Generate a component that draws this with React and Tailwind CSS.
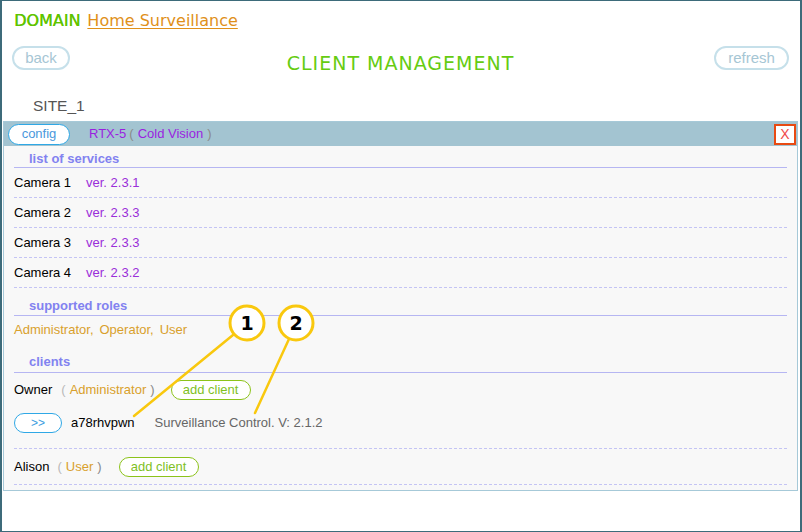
const services = [
  { name: "Camera 1", ver: "ver. 2.3.1" },
  { name: "Camera 2", ver: "ver. 2.3.3" },
  { name: "Camera 3", ver: "ver. 2.3.3" },
  { name: "Camera 4", ver: "ver. 2.3.2" },
];

const roles = ["Administrator", "Operator", "User"];

const sans = "font-['Liberation_Sans',Arial,sans-serif]";
const verdana = "font-['DejaVu_Sans',Verdana,sans-serif]";

export default function App() {
  return (
    <div
      className={`relative h-[532px] w-[802px] overflow-hidden border-x-2 border-y border-[#3d6b7a] bg-white ${sans}`}
    >
      {/* domain */}
      <div className={`flex items-baseline gap-[7px] pl-[12px] pt-[10px] text-[16px] leading-[20px] ${verdana}`}>
        <span className="text-[#5fc400] [text-shadow:0.4px_0_0_#5fc400]">DOMAIN</span>
        <span className="text-[#e0901a] underline underline-offset-[2px]">Home Surveillance</span>
      </div>

      {/* toolbar */}
      <div className="mt-[15px] grid grid-cols-[1fr_auto_1fr] items-start pl-[10px] pr-[11px]">
        <div>
          <GhostButton className="w-[58px]">back</GhostButton>
        </div>
        <h1
          className={`mt-[5px] text-[19px] leading-[24px] tracking-[1px] text-[#66cc11] ${verdana}`}
        >
          CLIENT MANAGEMENT
        </h1>
        <div className="flex justify-end">
          <GhostButton className="w-[75px]">refresh</GhostButton>
        </div>
      </div>

      <div className="mt-[22px] pl-[31px] text-[15.5px] leading-[18px] text-[#555]">SITE_1</div>

      {/* site panel */}
      <div className="ml-[1px] mr-[2px] mt-[6px] border border-[#a6c9d8] bg-[#f8f8f8]">
        <div className="flex h-[24px] items-center bg-[#a3c4d1] pl-[4px] pr-[1px] text-[13px]">
          <button className="h-[21px] w-[62px] rounded-full border border-[#2fa8e6] bg-white text-[13px] leading-[18px] text-[#4a98dc]">
            config
          </button>
          <span className="ml-[19px] text-[#9a1fe0]">RTX-5</span>
          <span className="ml-[3px] text-[#8a8a8a]">(</span>
          <span className="ml-[4px] text-[#9a1fe0]">Cold Vision</span>
          <span className="ml-[4px] text-[#8a8a8a]">)</span>
          <button className="ml-auto flex h-[21px] w-[22px] items-center justify-center border-2 border-[#e84a12] bg-white text-[14px] leading-none text-[#f04a4a]">
            X
          </button>
        </div>

        <div className="px-[10px] pb-[5px] text-[13px]">
          <SectionTitle className="h-[22px] pt-[5px]">list of services</SectionTitle>
          {services.map((s) => (
            <div
              key={s.name}
              className="flex h-[30px] items-center border-b border-dashed border-[#c4c4f4] leading-[16px]"
            >
              <span className="w-[72px] text-black">{s.name}</span>
              <span className="text-[#9a2fd9]">{s.ver}</span>
            </div>
          ))}

          <SectionTitle className="h-[28px] pt-[10px]">supported roles</SectionTitle>
          <div className="flex h-[28px] items-center text-[#d9a02c]">
            {roles.map((r, i) => (
              <span key={r} className={i > 0 ? "ml-[6px]" : ""}>
                {r}
                {i < roles.length - 1 ? "," : ""}
              </span>
            ))}
          </div>

          <SectionTitle className="h-[29px] pt-[10px]">clients</SectionTitle>
          <div className="flex h-[34px] items-center">
            <span className="text-black">Owner</span>
            <RoleTag className="ml-[9px]">Administrator</RoleTag>
            <AddClient className="ml-[16px]" />
          </div>
          <div className="flex h-[42px] items-start border-b border-dashed border-[#c4c4f4] pt-[6px]">
            <button className="h-[20px] w-[48px] rounded-full border border-[#2fa8e6] bg-white text-[12px] leading-[16px] text-[#3d9ce0]">
              &gt;&gt;
            </button>
            <span className="ml-[9px] leading-[20px] text-black">a78rhvpwn</span>
            <span className="ml-[20px] leading-[20px] text-[#666]">Surveillance Control. V: 2.1.2</span>
          </div>
          <div className="flex h-[36px] items-center border-b border-dashed border-[#c4c4f4]">
            <span className="text-black">Alison</span>
            <RoleTag className="ml-[8px]">User</RoleTag>
            <AddClient className="ml-[17px]" />
          </div>
        </div>
      </div>

      {/* callouts */}
      <svg className="pointer-events-none absolute left-0 top-0" width="802" height="532">
        <g stroke="#f9c80e" strokeWidth="2.5" strokeLinecap="round">
          <line x1="231" y1="334" x2="132" y2="415" />
          <line x1="287" y1="338" x2="253" y2="412" />
        </g>
        <g fill="#fff" stroke="#f9c80e" strokeWidth="3">
          <circle cx="245" cy="322" r="17" />
          <circle cx="294" cy="322" r="17" />
        </g>
        <g
          fill="#000"
          fontFamily="DejaVu Sans, Verdana, sans-serif"
          fontSize="19"
          fontWeight="bold"
          textAnchor="middle"
        >
          <text x="245" y="329">1</text>
          <text x="294" y="329">2</text>
        </g>
      </svg>
    </div>
  );
}

function GhostButton({ className = "", children }) {
  return (
    <button
      className={`h-[24px] rounded-full border-2 border-[#c6e0ea] bg-white text-[15px] leading-[18px] text-[#a6c6d4] ${className}`}
    >
      {children}
    </button>
  );
}

function SectionTitle({ className = "", children }) {
  return (
    <div
      className={`border-b border-[#b6b6f2] pl-[15px] text-[13px] font-bold leading-[16px] text-[#8282f0] ${className}`}
    >
      {children}
    </div>
  );
}

function RoleTag({ className = "", children }) {
  return (
    <span className={className}>
      <span className="text-[#b8b8b8]">(</span>
      <span className="mx-[4px] text-[#d9a02c]">{children}</span>
      <span className="text-[#888]">)</span>
    </span>
  );
}

function AddClient({ className = "" }) {
  return (
    <button
      className={`h-[20px] w-[80px] rounded-full border border-[#8cc31a] bg-white text-[13px] leading-[16px] text-[#7fbf1f] ${className}`}
    >
      add client
    </button>
  );
}
